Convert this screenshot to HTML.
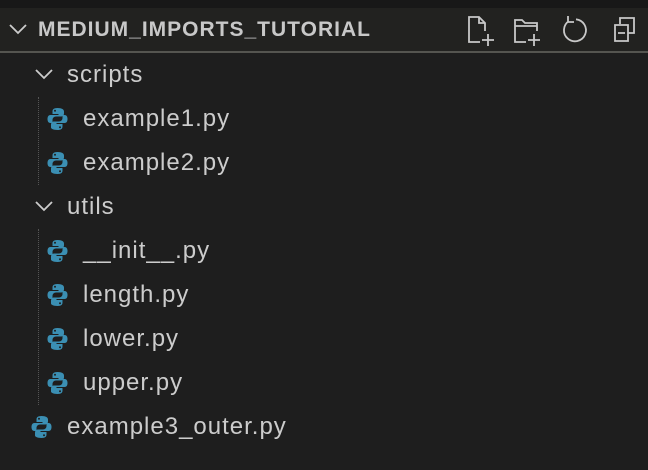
<!DOCTYPE html>
<html><head><style>
body{margin:0;width:648px;height:470px;background:#1e1e1e;overflow:hidden;font-family:"Liberation Sans",sans-serif;color:#cccccc;position:relative}
.top{position:absolute;left:0;top:0;width:648px;height:8px;background:#181818}
.hdr{position:absolute;left:0;top:8px;width:648px;height:43px;background:#222220;border-bottom:2px solid #555550}
.row{position:absolute;height:44px;line-height:44px;font-size:24px;letter-spacing:1px;white-space:nowrap}
.title{position:absolute;left:38px;top:8px;line-height:44px;font-size:21px;font-weight:bold;color:#c8c8c8;letter-spacing:1px}
svg{position:absolute}
.guide{position:absolute;left:38px;width:0;border-left:1px dotted #555}
</style></head><body>
<div class="top"></div>
<div class="hdr"></div>
<svg style="left:8px;top:22px" width="20" height="14" viewBox="0 0 20 14"><path d="M2 3l8 8 8-8" stroke="#ccc" stroke-width="1.8" fill="none"/></svg>
<div class="title">MEDIUM_IMPORTS_TUTORIAL</div>
<svg style="left:466px;top:14px" width="180" height="34" viewBox="0 0 180 34" fill="none" stroke="#c8c8c8" stroke-width="1.8">
<path d="M14 28H3V3h10l6 6v8M13 3v6h6M22 20v12M16 26h12"/>
<path d="M60 28H49V6h7l3 3h12v8M49 12h22M68 20v12M62 26h12"/>
<path d="M103 7A11 11 0 1 0 110 5.3M102 2v6h6"/>
<path d="M154 10V4h14v15h-6M149 11h13v16H149zM152 19h7"/>
</svg>
<svg style="left:34px;top:67px" width="20" height="14" viewBox="0 0 20 14"><path d="M2 3l8 8 8-8" stroke="#ccc" stroke-width="1.8" fill="none"/></svg>
<div class="row" style="left:67px;top:53px">scripts</div>
<div class="guide" style="top:97px;height:88px"></div>
<svg style="left:34px;top:199px" width="20" height="14" viewBox="0 0 20 14"><path d="M2 3l8 8 8-8" stroke="#ccc" stroke-width="1.8" fill="none"/></svg>
<div class="row" style="left:67px;top:185px">utils</div>
<div class="guide" style="top:229px;height:176px"></div>
<svg width="0" height="0"><defs><g id="py"><path d="M10 1C6 1 5 2.5 5 4.5V7h6v1H3C1 8 0 9.5 0 12s1 4 3 4h2v-3c0-2 1.5-3.5 3.5-3.5h5c1.5 0 3-1.3 3-3V4.5C16.5 2.5 14.5 1 10 1z" fill="#3b8fb3"/><path d="M10 23c4 0 5-1.5 5-3.5V17H9v-1h8c2 0 3-1.5 3-4s-1-4-3-4h-2v3c0 2-1.5 3.5-3.5 3.5h-5c-1.5 0-3 1.300-3 3v3C3.5 21.5 5.5 23 10 23z" fill="#3b8fb3"/><circle cx="7.5" cy="3.8" r="1" fill="#1e1e1e"/><circle cx="12.5" cy="20.2" r="1" fill="#1e1e1e"/></g></defs></svg>
<svg style="left:47px;top:107px" width="21" height="24" viewBox="0 0 20 24"><use href="#py"/></svg>
<div class="row" style="left:83px;top:97px">example1.py</div>
<svg style="left:47px;top:151px" width="21" height="24" viewBox="0 0 20 24"><use href="#py"/></svg>
<div class="row" style="left:83px;top:141px">example2.py</div>
<svg style="left:47px;top:239px" width="21" height="24" viewBox="0 0 20 24"><use href="#py"/></svg>
<div class="row" style="left:83px;top:229px">__init__.py</div>
<svg style="left:47px;top:283px" width="21" height="24" viewBox="0 0 20 24"><use href="#py"/></svg>
<div class="row" style="left:83px;top:273px">length.py</div>
<svg style="left:47px;top:327px" width="21" height="24" viewBox="0 0 20 24"><use href="#py"/></svg>
<div class="row" style="left:83px;top:317px">lower.py</div>
<svg style="left:47px;top:371px" width="21" height="24" viewBox="0 0 20 24"><use href="#py"/></svg>
<div class="row" style="left:83px;top:361px">upper.py</div>
<svg style="left:31px;top:415px" width="21" height="24" viewBox="0 0 20 24"><use href="#py"/></svg>
<div class="row" style="left:67px;top:405px">example3_outer.py</div>
</body></html>
